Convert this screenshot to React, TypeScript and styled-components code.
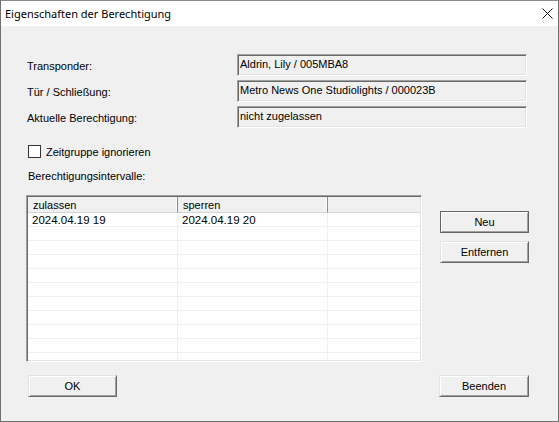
import React from 'react';
import styled, { createGlobalStyle } from 'styled-components';

const GlobalStyle = createGlobalStyle`
  html, body {
    margin: 0;
    padding: 0;
    background: #f0f0f0;
  }
  * {
    box-sizing: border-box;
  }
`;

const Window = styled.div`
  width: 559px;
  height: 422px;
  display: flex;
  flex-direction: column;
  border: 1px solid #6f6f6f;
  border-top-color: #8a8a8a;
  background: #f0f0f0;
  font-family: "Liberation Sans", Arial, sans-serif;
  font-size: 11px;
  color: #000;
`;

const TitleBar = styled.div`
  height: 25px;
  flex: 0 0 25px;
  display: flex;
  align-items: center;
  justify-content: space-between;
  background: #fff;
  padding-left: 4px;
`;

const Title = styled.span`
  font-family: "Noto Sans", "Open Sans", sans-serif;
  font-size: 11px;
  color: #000;
  margin-top: -1px;
`;

const CloseButton = styled.div`
  width: 46px;
  height: 25px;
  display: flex;
  align-items: center;
  justify-content: flex-end;
  padding-right: 5px;
`;

const Body = styled.div`
  flex: 1;
  display: flex;
  flex-direction: column;
  padding: 28px 29px 0 26px;
`;

const FieldGrid = styled.div`
  display: grid;
  grid-template-columns: 210px 290px;
  grid-auto-rows: 22px;
  row-gap: 4px;
`;

const Label = styled.div`
  display: flex;
  align-items: center;
  padding-top: 2px;
  white-space: nowrap;
`;

const Field = styled.div`
  display: flex;
  align-items: center;
  padding: 0 0 2px 2px;
  border-top: 1px solid #a0a0a0;
  border-left: 1px solid #a0a0a0;
  border-bottom: 1px solid #fff;
  border-right: 1px solid #fff;
  box-shadow: inset 1px 1px 0 #696969, inset -1px -1px 0 #e3e3e3;
  background: #f0f0f0;
  white-space: nowrap;
`;

const CheckRow = styled.label`
  display: flex;
  align-items: center;
  gap: 5px;
  height: 13px;
  margin-top: 17px;
  margin-left: 1px;
`;

const CheckBox = styled.span`
  width: 13px;
  height: 13px;
  border: 1px solid #333;
  background: #fff;
`;

const SectionLabel = styled.div`
  height: 13px;
  line-height: 13px;
  margin-top: 12px;
  margin-left: 1px;
`;

const TableRow = styled.div`
  display: flex;
  align-items: flex-start;
  gap: 18px;
  margin-top: 12px;
  margin-left: -1px;
`;

const Table = styled.div`
  width: 396px;
  height: 167px;
  overflow: hidden;
  border-top: 1px solid #a0a0a0;
  border-left: 1px solid #a0a0a0;
  border-bottom: 1px solid #fff;
  border-right: 1px solid #fff;
  box-shadow: inset 1px 1px 0 #696969, inset -1px -1px 0 #e3e3e3;
  padding: 1px;
  background: #fff;
`;

const ListGrid = styled.div`
  display: grid;
  grid-template-columns: 150px 150px 1fr;
  grid-template-rows: 16px;
  grid-auto-rows: 14px;
`;

const HeaderCell = styled.div<{ $last?: boolean }>`
  display: flex;
  align-items: center;
  padding-left: 5px;
  background: #f0f0f0;
  border-bottom: 1px solid #d5d5d5;
  border-right: ${p => (p.$last ? 'none' : '1px solid #8c8c8c')};
  box-shadow: ${p => (p.$last ? 'none' : 'inset -1px 0 0 #fff')};
`;

const Cell = styled.div<{ $last?: boolean }>`
  display: flex;
  align-items: center;
  padding-left: 4px;
  border-bottom: 1px solid #f0f0f0;
  border-right: ${p => (p.$last ? 'none' : '1px solid #f0f0f0')};
  white-space: nowrap;
  font-size: 11.5px;
`;

const SideButtons = styled.div`
  display: flex;
  flex-direction: column;
  gap: 8px;
  margin-top: 16px;
`;

const Button = styled.button<{ $default?: boolean; $width?: number }>`
  width: ${p => p.$width ?? 89}px;
  height: 22px;
  padding: 0 0 1px;
  font-family: "Liberation Sans", Arial, sans-serif;
  font-size: 11px;
  color: #000;
  background: #f0f0f0;
  border: 1px solid ${p => (p.$default ? '#646464' : '#e3e3e3')};
  border-right-color: ${p => (p.$default ? '#646464' : '#696969')};
  border-bottom-color: ${p => (p.$default ? '#646464' : '#696969')};
  box-shadow: inset 1px 1px 0 #fff, inset -1px -1px 0 #a0a0a0;
  cursor: default;
`;

const BottomRow = styled.div`
  display: flex;
  justify-content: space-between;
  margin-top: 13px;
  margin-left: 1px;
`;

const rows = [
  ['2024.04.19 19', '2024.04.19 20', ''],
  ...Array.from({ length: 10 }, () => ['', '', '']),
];

export default function App() {
  return (
    <>
      <GlobalStyle />
      <Window>
        <TitleBar>
          <Title>Eigenschaften der Berechtigung</Title>
          <CloseButton>
            <svg width="11" height="11" viewBox="0 0 11 11">
              <path d="M0.5 0.5 L10.5 10.5 M10.5 0.5 L0.5 10.5" stroke="#111" strokeWidth="1" />
            </svg>
          </CloseButton>
        </TitleBar>
        <Body>
          <FieldGrid>
            <Label>Transponder:</Label>
            <Field>Aldrin, Lily / 005MBA8</Field>
            <Label>Tür / Schließung:</Label>
            <Field>Metro News One Studiolights / 000023B</Field>
            <Label>Aktuelle Berechtigung:</Label>
            <Field>nicht zugelassen</Field>
          </FieldGrid>

          <CheckRow>
            <CheckBox />
            <span>Zeitgruppe ignorieren</span>
          </CheckRow>

          <SectionLabel>Berechtigungsintervalle:</SectionLabel>

          <TableRow>
            <Table>
              <ListGrid>
                <HeaderCell>zulassen</HeaderCell>
                <HeaderCell>sperren</HeaderCell>
                <HeaderCell $last />
                {rows.map((r, i) =>
                  r.map((c, j) => (
                    <Cell key={`${i}-${j}`} $last={j === 2}>
                      {c}
                    </Cell>
                  ))
                )}
              </ListGrid>
            </Table>
            <SideButtons>
              <Button $default>Neu</Button>
              <Button>Entfernen</Button>
            </SideButtons>
          </TableRow>

          <BottomRow>
            <Button>OK</Button>
            <Button $width={90}>Beenden</Button>
          </BottomRow>
        </Body>
      </Window>
    </>
  );
}
